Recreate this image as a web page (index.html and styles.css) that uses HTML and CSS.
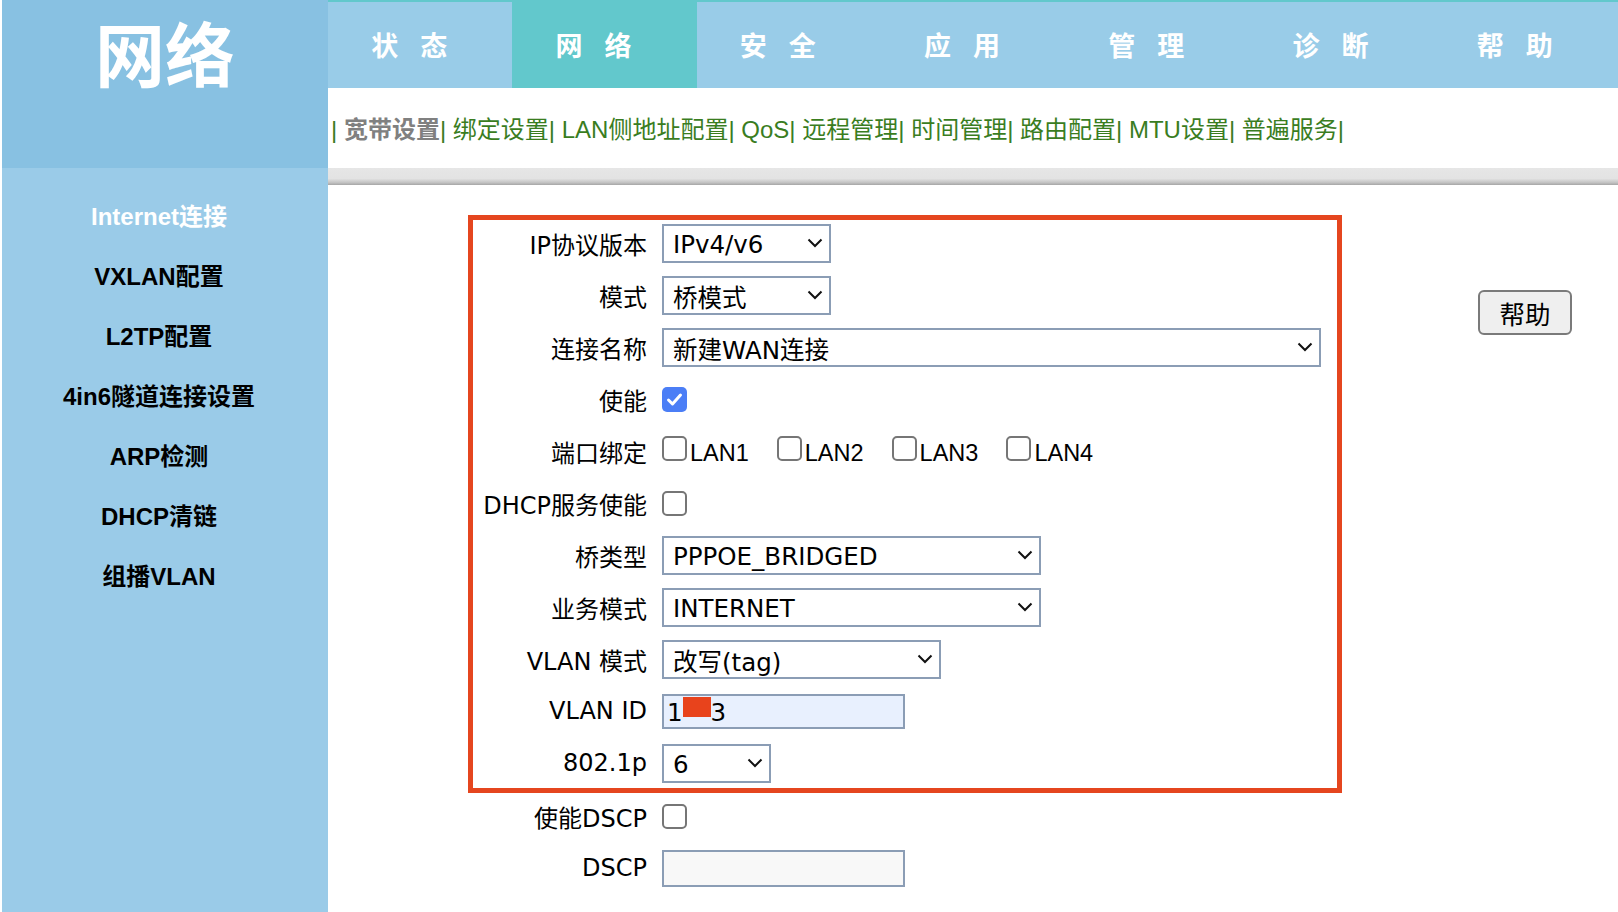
FILE: index.html
```html
<!DOCTYPE html>
<html lang="zh-CN">
<head>
<meta charset="utf-8">
<title>网络 - Internet连接</title>
<link rel="stylesheet" href="styles.css">
</head>
<body>
<div class="page">
  <aside class="side">
    <div class="logo">网络</div>
    <nav class="menu">
      <div class="menu-item active">Internet连接</div>
      <div class="menu-item">VXLAN配置</div>
      <div class="menu-item">L2TP配置</div>
      <div class="menu-item">4in6隧道连接设置</div>
      <div class="menu-item">ARP检测</div>
      <div class="menu-item">DHCP清链</div>
      <div class="menu-item">组播VLAN</div>
    </nav>
  </aside>
  <main class="main">
    <nav class="tabs">
      <div class="tab">状态</div>
      <div class="tab active">网络</div>
      <div class="tab">安全</div>
      <div class="tab">应用</div>
      <div class="tab">管理</div>
      <div class="tab">诊断</div>
      <div class="tab">帮助</div>
    </nav>
    <div class="subnav">| <span class="cur">宽带设置</span>| 绑定设置| LAN侧地址配置| QoS| 远程管理| 时间管理| 路由配置| MTU设置| 普遍服务|</div>
    <div class="divider"></div>
    <div class="content">
      <div class="formcol">
        <div class="box">
          <div class="row">
            <div class="label">IP协议版本</div>
            <div class="sel w169"><span>IPv4/v6</span><svg class="chev" viewBox="0 0 16 10" width="16" height="10"><path d="M1.5 1.5 L8 8 L14.5 1.5"/></svg></div>
          </div>
          <div class="row">
            <div class="label">模式</div>
            <div class="sel w169"><span>桥模式</span><svg class="chev" viewBox="0 0 16 10" width="16" height="10"><path d="M1.5 1.5 L8 8 L14.5 1.5"/></svg></div>
          </div>
          <div class="row">
            <div class="label">连接名称</div>
            <div class="sel w659"><span>新建WAN连接</span><svg class="chev" viewBox="0 0 16 10" width="16" height="10"><path d="M1.5 1.5 L8 8 L14.5 1.5"/></svg></div>
          </div>
          <div class="row">
            <div class="label">使能</div>
            <span class="cb checked"><svg viewBox="0 0 25 25" width="25" height="25"><path d="M6.5 13 L10.5 17 L18.5 8"/></svg></span>
          </div>
          <div class="row">
            <div class="label">端口绑定</div>
            <div class="cbl"><span class="cb"></span><span class="lan">LAN1</span></div>
            <div class="cbl"><span class="cb"></span><span class="lan">LAN2</span></div>
            <div class="cbl"><span class="cb"></span><span class="lan">LAN3</span></div>
            <div class="cbl"><span class="cb"></span><span class="lan">LAN4</span></div>
          </div>
          <div class="row">
            <div class="label">DHCP服务使能</div>
            <span class="cb"></span>
          </div>
          <div class="row">
            <div class="label">桥类型</div>
            <div class="sel w379"><span>PPPOE_BRIDGED</span><svg class="chev" viewBox="0 0 16 10" width="16" height="10"><path d="M1.5 1.5 L8 8 L14.5 1.5"/></svg></div>
          </div>
          <div class="row">
            <div class="label">业务模式</div>
            <div class="sel w379"><span>INTERNET</span><svg class="chev" viewBox="0 0 16 10" width="16" height="10"><path d="M1.5 1.5 L8 8 L14.5 1.5"/></svg></div>
          </div>
          <div class="row">
            <div class="label">VLAN 模式</div>
            <div class="sel w279"><span>改写(tag)</span><svg class="chev" viewBox="0 0 16 10" width="16" height="10"><path d="M1.5 1.5 L8 8 L14.5 1.5"/></svg></div>
          </div>
          <div class="row">
            <div class="label">VLAN ID</div>
            <div class="inp filled"><span>1</span><span class="redact"></span><span>3</span></div>
          </div>
          <div class="row">
            <div class="label">802.1p</div>
            <div class="sel w109"><span>6</span><svg class="chev" viewBox="0 0 16 10" width="16" height="10"><path d="M1.5 1.5 L8 8 L14.5 1.5"/></svg></div>
          </div>
        </div>
        <div class="after">
          <div class="row">
            <div class="label">使能DSCP</div>
            <span class="cb"></span>
          </div>
          <div class="row">
            <div class="label">DSCP</div>
            <div class="inp empty"></div>
          </div>
        </div>
      </div>
      <button class="help" type="button">帮助</button>
    </div>
  </main>
</div>
</body>
</html>
```
FILE: styles.css
```css
html, body {
  margin: 0;
  padding: 0;
  background: #ffffff;
}
body {
  font-family: "DejaVu Sans", "Noto Sans CJK SC", sans-serif;
  color: #000;
}
.page {
  display: flex;
  height: 912px;
  padding-left: 2px;
  box-sizing: border-box;
  overflow: hidden;
}
.side {
  width: 326px;
  flex-shrink: 0;
  display: flex;
  flex-direction: column;
}
.logo {
  height: 168px;
  box-sizing: border-box;
  padding-top: 17px;
  background: #88c1e2;
  color: #fff;
  font-family: "Noto Sans CJK SC", sans-serif;
  font-weight: 700;
  font-size: 70px;
  line-height: 70px;
  text-align: center;
}
.menu {
  flex: 1;
  background: #9acbe8;
  padding-top: 19px;
  padding-right: 12px;
}
.menu-item {
  height: 60px;
  line-height: 60px;
  text-align: center;
  font-family: "Liberation Sans", "Noto Sans CJK SC", sans-serif;
  font-weight: 700;
  font-size: 24px;
  color: #000;
}
.menu-item.active {
  color: #fff;
}
.main {
  flex: 1;
  display: flex;
  flex-direction: column;
  min-width: 0;
}
.tabs {
  display: flex;
  height: 88px;
  box-sizing: border-box;
  border-top: 2px solid #62c8cc;
  background: #99cce8;
}
.tab {
  flex: 1;
  text-align: center;
  line-height: 86px;
  color: #fff;
  font-family: "Noto Sans CJK SC", sans-serif;
  font-weight: 700;
  font-size: 27px;
  letter-spacing: 22px;
}
.tab.active {
  background: #62c8cc;
}
.subnav {
  height: 80px;
  line-height: 80px;
  padding-top: 2px;
  box-sizing: border-box;
  padding-left: 3px;
  white-space: nowrap;
  font-family: "Liberation Sans", "Noto Sans CJK SC", sans-serif;
  font-size: 24px;
  color: #3a7d1f;
}
.subnav .cur {
  color: #808080;
  font-weight: 700;
}
.divider {
  height: 17px;
  background: linear-gradient(#e6e6e6 0%, #e3e3e3 62%, #c4c4c4 85%, #a6a6a6 100%);
}
.content {
  display: flex;
  align-items: flex-start;
  padding-top: 30px;
  padding-left: 140px;
}
.formcol {
  display: flex;
  flex-direction: column;
}
.box {
  width: 874px;
  box-sizing: border-box;
  border: 5px solid #e5461f;
  padding-bottom: 2px;
  display: flex;
  flex-direction: column;
  gap: 6px;
}
.after {
  padding-left: 5px;
  display: flex;
  flex-direction: column;
  gap: 6px;
}
.row {
  height: 46px;
  display: flex;
  align-items: center;
}
.label {
  width: 174px;
  flex-shrink: 0;
  margin-right: 15px;
  text-align: right;
  font-size: 24px;
  white-space: nowrap;
}
.sel {
  height: 39px;
  box-sizing: border-box;
  border: 2px solid #8b9db5;
  background: #fff;
  display: flex;
  align-items: center;
  justify-content: space-between;
  padding: 0 6px 0 9px;
  font-size: 24.5px;
  white-space: nowrap;
}
.sel span {
  padding-top: 3px;
}
.chev {
  flex-shrink: 0;
}
.chev path {
  fill: none;
  stroke: #111;
  stroke-width: 2;
}
.w169 { width: 169px; }
.w659 { width: 659px; }
.w379 { width: 379px; }
.w279 { width: 279px; }
.w109 { width: 109px; }
.cb {
  display: inline-block;
  width: 25px;
  height: 25px;
  box-sizing: border-box;
  border: 2px solid #767676;
  border-radius: 5px;
  background: #fff;
  flex-shrink: 0;
}
.cb.checked {
  border: none;
  background: #4b7ef6;
}
.cb svg {
  display: block;
}
.cb svg path {
  fill: none;
  stroke: #fff;
  stroke-width: 3;
  stroke-linecap: round;
  stroke-linejoin: round;
}
.cbl {
  display: flex;
  align-items: baseline;
  margin-right: 28px;
}
.lan {
  margin-left: 3px;
  font-family: "Liberation Sans", sans-serif;
  font-size: 23.5px;
  line-height: 25px;
}
.inp {
  width: 243px;
  box-sizing: border-box;
  border: 2px solid #8b9db5;
  display: flex;
  align-items: center;
  padding-left: 3px;
  font-size: 24.5px;
}
.inp span {
  padding-top: 3px;
}
.inp.filled {
  height: 35px;
  background: #e8f0fe;
}
.inp.empty {
  height: 37px;
  background: #f8f8f8;
}
.inp .redact {
  width: 28px;
  height: 20px;
  padding: 0;
  margin-left: 0;
  background: #e8431c;
  align-self: flex-start;
  margin-top: 1px;
}
.help {
  margin-left: 136px;
  margin-top: 75px;
  width: 94px;
  height: 45px;
  box-sizing: border-box;
  border: 2px solid #7a7a7a;
  border-radius: 6px;
  background: #efefef;
  font-family: "Noto Sans CJK SC", sans-serif;
  font-size: 25.5px;
  color: #000;
  padding: 0;
  line-height: 1;
}
```
